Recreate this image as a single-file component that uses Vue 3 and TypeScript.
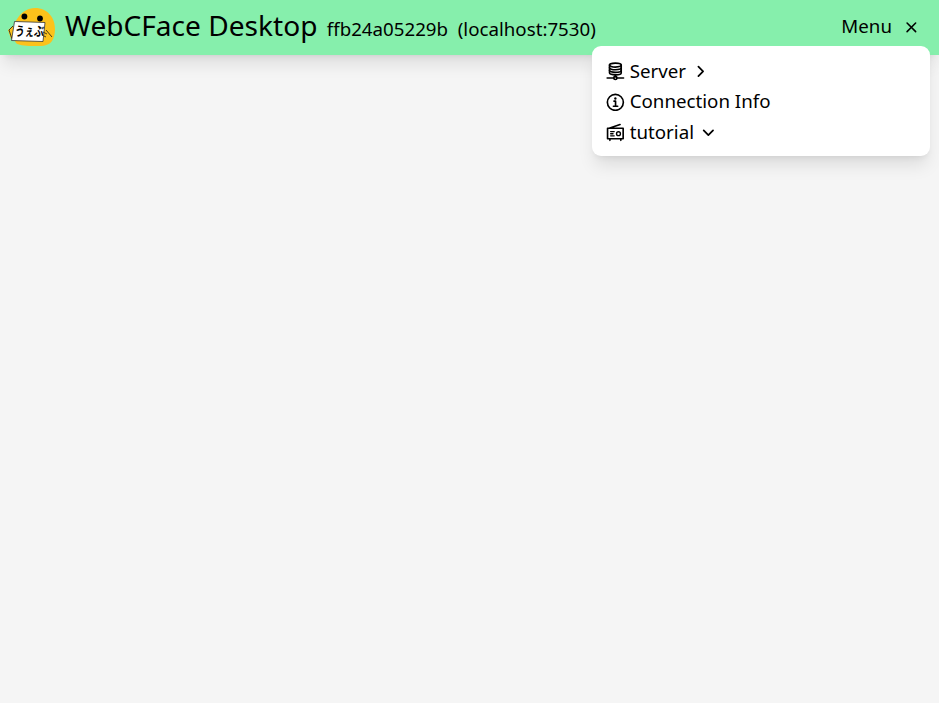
<script setup lang="ts">
import { ref } from 'vue'

interface MenuItem {
  label: string
  icon: 'server' | 'info' | 'radio'
  arrow?: 'right' | 'down'
}

const host = ref('ffb24a05229b')
const address = ref('(localhost:7530)')
const menuOpen = ref(true)
const items: MenuItem[] = [
  { label: 'Server', icon: 'server', arrow: 'right' },
  { label: 'Connection Info', icon: 'info' },
  { label: 'tutorial', icon: 'radio', arrow: 'down' },
]
</script>

<template>
  <div class="page">
    <header class="header">
      <svg class="logo" viewBox="0 0 48 40" aria-hidden="true">
        <path class="face" d="M5 30C3 17 13 1 27 1c13 0 20 10 20 21 0 5-1 9-3 12-4 6-13 5-20 5-8 0-14-1-16-3Z" />
        <path class="face" d="M5 19 0 23l3 9h4Z" />
        <path class="line" d="M5 19 1 23l3 9" />
        <circle cx="16.4" cy="9.500" r="2.900" />
        <circle cx="32" cy="11.500" r="2.900" />
        <path class="sheet" d="M6.500 14.500 37 15.500 35 34.500 3.500 33.500Z" />
        <path class="line" d="m35 25 4 2M38 23l6 7M34 28l4 2" />
        <text class="word" transform="translate(6.500 29) skewX(-6)" textLength="29" lengthAdjust="spacingAndGlyphs">うぇぶ</text>
      </svg>
      <h1 class="title">WebCFace Desktop</h1>
      <span class="host">{{ host }}</span>
      <span class="address">{{ address }}</span>
      <button class="menu-button" @click="menuOpen = !menuOpen">
        <span>Menu</span>
        <svg class="close" viewBox="0 0 48 48"><path d="m13 13 22 22M13 35 35 13" /></svg>
      </button>
    </header>
    <nav v-if="menuOpen" class="menu">
      <ul>
        <li v-for="item in items" :key="item.label">
          <svg class="icon" viewBox="0 0 48 48">
            <g v-if="item.icon === 'server'">
              <path d="M39 8v20c0 3-6.700 5-15 5S9 31 9 28V8" />
              <path d="M39 21.500c0 3-6.700 5-15 5s-15-2-15-5M39 15c0 3-6.700 5-15 5S9 18 9 15" />
              <ellipse cx="24" cy="8" rx="15" ry="5" />
              <path d="M24 33v5M3 41h17M28 41h17" />
              <circle cx="24" cy="41" r="4" />
            </g>
            <g v-else-if="item.icon === 'info'">
              <circle cx="24" cy="24" r="20.500" />
              <path d="M24.500 34V21h-4M19 34h11" />
              <circle class="dot" cx="24" cy="14" r="3" />
            </g>
            <g v-else>
              <path d="M4 13.500h40v27H4ZM8 13.500 36 4M10 41v3.500M38 41v3.500" />
              <path class="detail" d="M12 22h9M12 27.500h6M12 33h9" />
              <circle class="detail" cx="32" cy="27.500" r="5" />
            </g>
          </svg>
          <span>{{ item.label }}</span>
          <svg v-if="item.arrow" class="arrow" :class="item.arrow" viewBox="0 0 48 48">
            <path d="m19 12 12 12-12 12" />
          </svg>
        </li>
      </ul>
    </nav>
  </div>
</template>

<style>
body {
  background: #f5f5f5;
}
</style>

<style scoped>
.page {
  position: relative;
  min-height: 703px;
  box-sizing: border-box;
  background: #f5f5f5;
  color: #000;
  font: 18.720px/30.400px "Noto Sans", "Noto Sans CJK JP", sans-serif;
}
.header {
  display: flex;
  align-items: baseline;
  height: 55px;
  box-sizing: border-box;
  padding: 0 18px 0 7.500px;
  background: #86efac;
  box-shadow: 0 11.700px 17.500px -3.500px rgb(0 0 0 / 10%), 0 4.700px 7px -4.700px rgb(0 0 0 / 10%);
}
.logo {
  align-self: center;
  width: 48px;
  height: 40px;
  margin: 0 9.400px 1px 0;
}
.face {
  fill: #fcc21b;
}
.sheet {
  fill: #fff;
  stroke: #333;
  stroke-width: 0.8;
}
.line {
  fill: none;
  stroke: #4b3b16;
  stroke-width: 1;
}
.word {
  font: 700 13px "Noto Sans CJK JP", sans-serif;
}
.title {
  margin: 0 9.400px 0 0;
  font-size: 28.080px;
  font-weight: 400;
  line-height: 50px;
}
.host {
  margin-right: 9.700px;
}
.menu-button {
  display: flex;
  align-items: center;
  align-self: center;
  margin: 0 0 1px auto;
  padding: 0;
  border: 0;
  background: none;
  color: inherit;
  font: inherit;
}
.menu-button span {
  padding-bottom: 2px;
}
svg {
  flex: none;
}
.close,
.icon,
.arrow {
  width: 18.720px;
  height: 18.720px;
  fill: none;
  stroke: currentColor;
  stroke-width: 4.200;
  stroke-linecap: round;
  stroke-linejoin: round;
}
.close {
  margin-left: 10.300px;
  stroke-width: 4;
}
.menu {
  position: absolute;
  top: 46px;
  right: 9px;
  width: 338px;
  height: 110px;
  box-sizing: border-box;
  padding: 9.800px 14px 9px;
  border-radius: 9px;
  background: #fff;
  box-shadow: 0 11.700px 17.500px -3.500px rgb(0 0 0 / 10%), 0 4.700px 7px -4.700px rgb(0 0 0 / 10%);
}
.menu ul {
  margin: 0;
  padding: 0;
  list-style: none;
}
.menu li {
  display: flex;
  align-items: center;
  height: 30.400px;
}
.icon {
  margin: 1px 5px 0 0;
}
.dot {
  fill: currentColor;
  stroke: none;
}
.detail {
  stroke-width: 3.500;
}
.arrow {
  margin: 1px 0 0 5px;
  stroke-width: 4.500;
}
.arrow.down {
  transform: rotate(90deg);
}
</style>
